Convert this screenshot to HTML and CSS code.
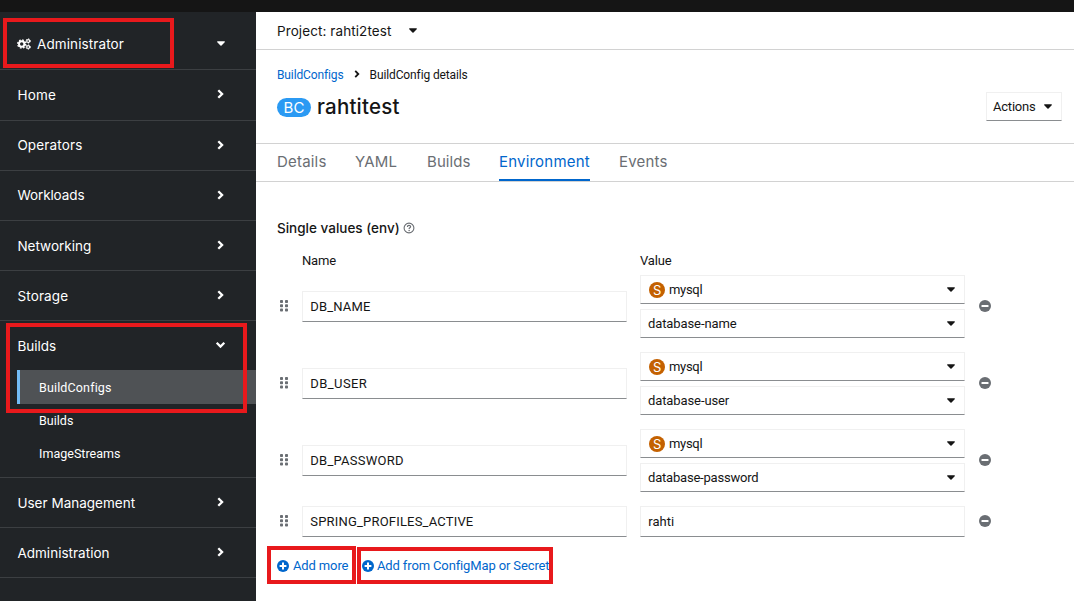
FILE: index.html
```
<!DOCTYPE html>
<html lang="en">
<head>
<meta charset="utf-8">
<title>rahtitest · BuildConfig details</title>
<link rel="stylesheet" href="styles.css">
</head>
<body>
<svg class="sprite" aria-hidden="true">
  <symbol id="caret" viewBox="0 0 9 5"><path d="M.8 0h7.4c.7 0 1 .7.5 1.2L5.100 4.700c-.3.3-.9.3-1.200 0L.3 1.200C-.2.7.1 0 .8 0z"/></symbol>
  <symbol id="chevron" viewBox="0 0 7 10"><path d="M1.300 1.200 5.100 5 1.300 8.800" fill="none" stroke="currentColor" stroke-width="2.300"/></symbol>
  <symbol id="grip" viewBox="0 0 8 12"><g><rect width="3" height="3" rx=".8"/><rect x="5" width="3" height="3" rx=".8"/><rect y="4.300" width="3" height="3" rx=".8"/><rect x="5" y="4.300" width="3" height="3" rx=".8"/><rect y="8.600" width="3" height="3" rx=".8"/><rect x="5" y="8.600" width="3" height="3" rx=".8"/></g></symbol>
  <symbol id="minus" viewBox="0 0 12 12"><circle cx="6" cy="6" r="6"/><rect x="2.500" y="4.900" width="7" height="2.200" rx=".4" fill="#fff"/></symbol>
  <symbol id="plus" viewBox="0 0 12 12"><circle cx="6" cy="6" r="6"/><path d="M6 2.600v6.800M2.600 6h6.800" stroke="#fff" stroke-width="2"/></symbol>
  <symbol id="help" viewBox="0 0 12 12"><circle cx="6" cy="6" r="4.900" fill="none" stroke="currentColor" stroke-width="1.100"/><path d="M4.400 4.900c0-1.900 3.200-1.900 3.200-.1 0 1-1.500 1.100-1.500 2.100" fill="none" stroke="currentColor" stroke-width="1.200"/><circle cx="6.100" cy="8.500" r=".75"/></symbol>
  <symbol id="cogs" viewBox="0 0 14 12"><circle cx="4.700" cy="6" r="2.700" fill="none" stroke="currentColor" stroke-width="2"/><circle cx="4.700" cy="6" r="4" fill="none" stroke="currentColor" stroke-width="1.400" stroke-dasharray="1.700 1.442"/><circle cx="11.200" cy="3" r="1.450" fill="none" stroke="currentColor" stroke-width="1.200"/><circle cx="11.200" cy="3" r="2.200" fill="none" stroke="currentColor" stroke-width=".9" stroke-dasharray="1.200 1.104"/><circle cx="11.200" cy="9" r="1.450" fill="none" stroke="currentColor" stroke-width="1.200"/><circle cx="11.200" cy="9" r="2.200" fill="none" stroke="currentColor" stroke-width=".9" stroke-dasharray="1.200 1.104"/></symbol>
</svg>
<header class="masthead"></header>
<div class="shell">
  <nav class="sidebar">
    <div class="perspective"><svg class="cogs"><use href="#cogs"/></svg><span>Administrator</span><svg class="caret"><use href="#caret"/></svg></div>
    <div class="section section-first"><span class="wider">Home</span><svg class="chevron"><use href="#chevron"/></svg></div>
    <div class="section raised"><span class="wide">Operators</span><svg class="chevron"><use href="#chevron"/></svg></div>
    <div class="section raised"><span class="snug">Workloads</span><svg class="chevron"><use href="#chevron"/></svg></div>
    <div class="section"><span>Networking</span><svg class="chevron"><use href="#chevron"/></svg></div>
    <div class="section"><span class="wide">Storage</span><svg class="chevron"><use href="#chevron"/></svg></div>
    <div class="section section-open"><span>Builds</span><svg class="chevron down"><use href="#chevron"/></svg></div>
    <ul class="subnav">
      <li class="current"><span class="wide">BuildConfigs</span></li>
      <li><span>Builds</span></li>
      <li><span>ImageStreams</span></li>
    </ul>
    <div class="section"><span>User Management</span><svg class="chevron"><use href="#chevron"/></svg></div>
    <div class="section"><span>Administration</span><svg class="chevron"><use href="#chevron"/></svg></div>
    <div class="callout callout-admin"></div>
    <div class="callout callout-builds"></div>
  </nav>
  <main class="content">
    <div class="project"><span>Project: rahti2test</span><svg class="caret"><use href="#caret"/></svg></div>
    <section class="heading">
      <div class="crumbs"><a>BuildConfigs</a><svg class="chevron"><use href="#chevron"/></svg><span>BuildConfig details</span></div>
      <div class="title-row">
        <span class="badge-bc">BC</span><h1>rahtitest</h1>
        <button class="actions">Actions<svg class="caret"><use href="#caret"/></svg></button>
      </div>
    </section>
    <div class="tabs"><a class="t-details">Details</a><a class="t-yaml">YAML</a><a class="t-builds">Builds</a><a class="t-env active">Environment</a><a class="t-events">Events</a></div>
    <section class="env">
      <h2>Single values (env)<svg class="help"><use href="#help"/></svg></h2>
      <div class="row labels"><span></span><span>Name</span><span>Value</span></div>
      <div class="row">
        <svg class="grip"><use href="#grip"/></svg><div class="field"><span class="wide">DB_NAME</span></div>
        <div class="pair"><div class="select"><i class="secret">S</i><span class="resource">mysql</span><svg class="caret"><use href="#caret"/></svg></div><div class="select"><span>database-name</span><svg class="caret"><use href="#caret"/></svg></div></div>
        <svg class="minus"><use href="#minus"/></svg>
      </div>
      <div class="row">
        <svg class="grip"><use href="#grip"/></svg><div class="field"><span class="widest">DB_USER</span></div>
        <div class="pair"><div class="select"><i class="secret">S</i><span class="resource">mysql</span><svg class="caret"><use href="#caret"/></svg></div><div class="select"><span>database-user</span><svg class="caret"><use href="#caret"/></svg></div></div>
        <svg class="minus"><use href="#minus"/></svg>
      </div>
      <div class="row">
        <svg class="grip"><use href="#grip"/></svg><div class="field"><span class="wider">DB_PASSWORD</span></div>
        <div class="pair"><div class="select"><i class="secret">S</i><span class="resource">mysql</span><svg class="caret"><use href="#caret"/></svg></div><div class="select"><span class="tight">database-password</span><svg class="caret"><use href="#caret"/></svg></div></div>
        <svg class="minus"><use href="#minus"/></svg>
      </div>
      <div class="row row-plain">
        <svg class="grip"><use href="#grip"/></svg><div class="field"><span class="profiles">SPRING_PROFILES_ACTIVE</span></div>
        <div class="field"><span>rahti</span></div>
        <svg class="minus"><use href="#minus"/></svg>
      </div>
      <div class="links">
        <a class="more"><svg class="plus"><use href="#plus"/></svg>Add more<i class="callout callout-more"></i></a>
        <a class="from"><svg class="plus"><use href="#plus"/></svg>Add from ConfigMap or Secret<i class="callout callout-from"></i></a>
      </div>
    </section>
  </main>
</div>
</body>
</html>
```
FILE: styles.css
```
* { box-sizing: border-box; }
body { margin: 0; width: 1074px; height: 601px; overflow: hidden; background: #fff; color: #151515; font: 13px/20px Roboto, "Noto Sans", sans-serif; }
.sprite { position: absolute; width: 0; height: 0; }
svg { display: block; flex: none; fill: currentColor; }
.caret { width: 8px; height: 5px; }
.chevron { width: 7px; height: 10px; }
.masthead { height: 12px; background: #151515; }
.shell { display: flex; height: 589px; }

.sidebar { position: relative; width: 256px; flex: none; background: #212427; color: #fff; font: 13.5px/20px Inter, sans-serif; letter-spacing: .02px; }
.perspective, .section { display: flex; align-items: center; border-bottom: 1px solid #3c3f42; padding-left: 17.4px; }
.perspective { height: 58px; padding: 7px 31px 0 17px; letter-spacing: .1px; }
.perspective .cogs { width: 14px; height: 12px; margin-right: 6px; }
.perspective .caret, .section .chevron { margin-left: auto; }
.perspective .caret { margin-top: -1px; }
.section { height: 50px; padding-right: 32.5px; padding-top: 1px; }
.section .chevron { margin-top: -2px; }
.section-first { height: 51px; padding-top: 0; }
.raised { padding-top: 0; padding-bottom: 1px; }
.raised .chevron { margin-top: 0; }
.section-open { height: 49px; border: 0; padding: 1px 32px 0 17.4px; }
.section .down { transform: rotate(90deg); }
.wide { letter-spacing: .15px; }
.wider { letter-spacing: .25px; }
.widest { letter-spacing: .42px; }
.profiles { letter-spacing: .19px; }
.snug { letter-spacing: -.09px; }
.tight { letter-spacing: -.2px; }
.subnav { list-style: none; margin: 0; padding: 0 0 7px 17px; border-bottom: 1px solid #3c3f42; height: 108px; font: 12.5px/33px Roboto, sans-serif; }
.subnav li { height: 33px; padding-left: 22px; }
.subnav .current { height: 34px; line-height: 35px; padding-left: 19px; border-left: 3px solid #73bcf7; background: #4f5255; }

.callout { position: absolute; border: 4px solid #e8191c; pointer-events: none; }
.callout-admin { left: 3px; top: 6px; width: 171px; height: 50px; }
.callout-builds { left: 6px; top: 311px; width: 241px; height: 90px; }
.callout-more { left: -10px; top: -10px; width: 89px; height: 38px; }
.callout-from { left: -5px; top: -9px; width: 196px; height: 37px; }

.content { flex: 1; min-width: 0; }
.project { display: flex; align-items: center; height: 38px; padding-left: 21px; border-bottom: 1px solid #d2d2d2; font: 13.5px/20px Inter, sans-serif; letter-spacing: .09px; }
.project .caret { margin-left: 17px; margin-top: -1px; }
.heading { height: 94px; padding: 15px 12px 0 21px; border-bottom: 1px solid #d2d2d2; }
.crumbs { display: flex; align-items: center; height: 20px; font-size: 12px; letter-spacing: -.12px; }
.crumbs a, .links a { color: #06c; }
.crumbs .chevron { width: 6px; height: 8px; margin: -2px 10px 0; }
.title-row { display: flex; align-items: center; height: 42px; }
.badge-bc { width: 34px; height: 19px; margin-top: 3px; border-radius: 10px; background: #2b9af3; color: #fff; font: 15px/19px Inter, sans-serif; text-align: center; }
h1 { margin: 1px 0 0 6px; font: 500 20.5px/28px Inter, sans-serif; letter-spacing: .2px; }
.actions { display: flex; align-items: center; justify-content: space-between; width: 76px; height: 29px; margin-left: auto; padding: 1px 9px 0 6px; background: #fff; color: #151515; border: 1px solid #f0f0f0; border-bottom-color: #8a8d90; font: inherit; letter-spacing: -.21px; }
.tabs { display: flex; gap: 28px; height: 38px; padding-left: 21px; border-bottom: 1px solid #d2d2d2; color: #6a6e73; font: 15px/36px Inter, sans-serif; }
.tabs a { height: 37px; white-space: nowrap; letter-spacing: .2px; }
.t-details { width: 50px; }
.t-yaml { width: 44px; }
.tabs .t-builds { width: 44px; letter-spacing: .07px; }
.t-env { width: 91px; }
.t-events { margin-left: 1px; }
.tabs .active { color: #06c; border-bottom: 2px solid #06c; }

.env { padding: 36px 0 0 21px; }
h2 { display: flex; align-items: center; height: 20px; margin: 0; font: 500 13.5px/20px Inter, sans-serif; letter-spacing: 0; }
.help { width: 12px; height: 12px; margin-left: 3.5px; color: #6a6e73; }
.row { display: grid; grid-template-columns: 12px 325px 325px 12px; column-gap: 13px; align-items: center; height: 63px; margin-bottom: 14px; }
.labels { height: 20px; margin: 13px 0 4px; letter-spacing: -.16px; }
.grip { width: 8px; height: 12px; margin: 0 0 1px 3px; color: #6a6e73; }
.minus { width: 12px; height: 12px; margin: 0 0 1px 1px; color: #6a6e73; }
.field, .select { display: flex; align-items: center; border: 1px solid #f0f0f0; border-bottom-color: #8a8d90; }
.field { height: 31px; padding-left: 7.3px; }
.pair { display: grid; gap: 5px; }
.select { height: 29px; padding: 0 9px 0 7px; letter-spacing: -.1px; }
.select .caret { margin-left: auto; }
.secret { width: 16px; height: 16px; margin: 1px 4px 0 1px; border-radius: 50%; background: #c46100; color: #fff; font: normal 13px/16px Inter, sans-serif; text-align: center; }
.resource { letter-spacing: -.3px; }
.row-plain { height: 31px; margin-bottom: 0; }
.links { display: flex; gap: 14px; margin-top: 19px; }
.links a { position: relative; display: flex; align-items: center; height: 20px; white-space: nowrap; letter-spacing: -.13px; }
.plus { width: 12px; height: 12px; margin-right: 4px; }
.links .more { width: 71px; }
.links .from .plus { margin-right: 3px; }
```
